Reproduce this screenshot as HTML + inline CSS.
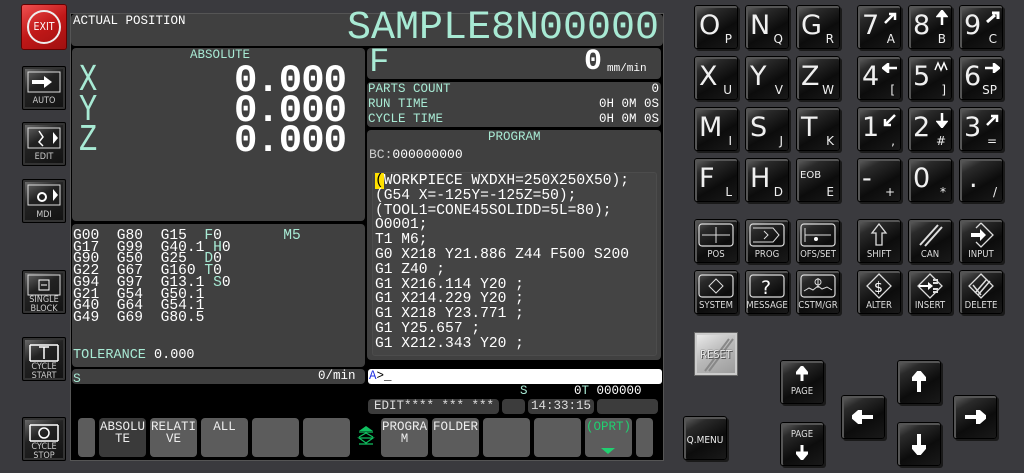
<!DOCTYPE html>
<html><head><meta charset="utf-8">
<style>
*{margin:0;padding:0;box-sizing:border-box}
body{width:1024px;height:473px;background:#3a3a3e;position:relative;overflow:hidden;font-family:"Liberation Mono",monospace;color:#fff}
.a{position:absolute}
.p{position:absolute;background:#404040;border-radius:4px}
.m{color:#a8ead4}
.t{font-size:12.5px;line-height:15px;white-space:pre}
.key{position:absolute;width:44px;height:44px;border-radius:3px;background:linear-gradient(150deg,#6a6a6a 0%,#2a2a2a 25%,#0c0c0c 60%,#1a1a1a 100%);box-shadow:inset 0 0 0 1px #000,inset 1px 1px 0 2px #555,2px 2px 0 #1a1a1a;font-family:"DejaVu Sans",sans-serif;color:#f0f0f0}
.key .b{position:absolute;left:5px;top:6px;font-size:27px;line-height:30px}
.key .s{position:absolute;right:6px;bottom:4px;font-size:12px;line-height:12px}
.key .l{position:absolute;left:0;right:0;bottom:3px;text-align:center;font-family:"DejaVu Sans Condensed","DejaVu Sans",sans-serif;font-size:9.5px;color:#ddd}
.key svg{position:absolute}
.sk{position:absolute;top:418px;height:39px;background:#5c5c5c;border-radius:4px;color:#eee;font-size:12.5px;line-height:12px;text-align:center;padding-top:3px}
.lb{position:absolute;left:22px;width:44px;height:44px;background:linear-gradient(150deg,#777,#222 40%,#111);box-shadow:inset 0 0 0 1px #000,inset 0 0 0 3px #333;border-radius:2px}
.lb .l{position:absolute;left:0;right:0;text-align:center;color:#ccc;font-family:"DejaVu Sans Condensed",sans-serif;font-size:9px;line-height:9px}
</style></head><body>

<div class="a" style="left:22px;top:5px;width:44px;height:44px;background:linear-gradient(150deg,#f05050,#c01818 50%,#a01010);border-radius:2px;box-shadow:0 0 0 1px #600">
<div class="a" style="left:5px;top:5px;width:34px;height:34px;border:2px solid #eee;border-radius:50%;color:#fff;font-family:'DejaVu Sans Condensed',sans-serif;font-size:10.5px;line-height:30px;text-align:center">EXIT</div></div>

<div class="lb" style="top:66px"><svg class="a" style="left:5px;top:5px" width="34" height="22"><rect x="1" y="1" width="32" height="20" fill="none" stroke="#ddd"/><path d="M5 9h12v-4l8 6-8 6v-4H5z" fill="#fff"/></svg><div class="l" style="top:31px">AUTO</div></div>
<div class="lb" style="top:122px"><svg class="a" style="left:5px;top:5px" width="34" height="22"><rect x="1" y="1" width="32" height="20" fill="none" stroke="#ddd"/><path d="M12 4l4 6-4 5 4 4" fill="none" stroke="#fff" stroke-width="1.5"/><path d="M26 5l5 6-5 6z" fill="#fff"/></svg><div class="l" style="top:31px">EDIT</div></div>
<div class="lb" style="top:179px"><svg class="a" style="left:5px;top:5px" width="34" height="22"><rect x="1" y="1" width="32" height="20" fill="none" stroke="#ddd"/><circle cx="15" cy="13" r="4" fill="none" stroke="#fff" stroke-width="2"/><path d="M26 5l5 6-5 6z" fill="#fff"/></svg><div class="l" style="top:32px">MDI</div></div>
<div class="lb" style="top:270px"><svg class="a" style="left:5px;top:4px" width="34" height="22"><rect x="1" y="1" width="32" height="20" fill="none" stroke="#ddd"/><rect x="12" y="6" width="10" height="10" fill="none" stroke="#fff"/><path d="M14 11h6" stroke="#fff"/></svg><div class="l" style="top:26px">SINGLE<br>BLOCK</div></div>
<div class="lb" style="top:337px"><svg class="a" style="left:5px;top:4px" width="34" height="22"><path d="M3 4h28M3 4v16M31 4v16M3 20h28M12 6h10M17 6v12" stroke="#fff" fill="none" stroke-width="1.5"/></svg><div class="l" style="top:26px">CYCLE<br>START</div></div>
<div class="lb" style="top:417px"><svg class="a" style="left:5px;top:4px" width="34" height="22"><path d="M3 4h28M3 4v16M31 4v16M3 20h28" stroke="#fff" fill="none" stroke-width="1.5"/><circle cx="17" cy="12" r="5" fill="none" stroke="#fff" stroke-width="1.5"/></svg><div class="l" style="top:26px">CYCLE<br>STOP</div></div>

<div class="a" style="left:70px;top:13px;width:594px;height:448px;background:#000;border:1px solid #555"></div>
<div class="p" style="left:71px;top:14px;width:592px;height:32px"></div>
<div class="a t" style="left:73px;top:14px">ACTUAL POSITION</div>
<div class="a m" style="left:347px;top:7px;font-size:40px;line-height:44px;letter-spacing:0px">SAMPLE8N00000</div>

<div class="p" style="left:72px;top:48px;width:293px;height:173px"></div>
<div class="a m t" style="left:190px;top:48px">ABSOLUTE</div>
<div class="a m" style="left:79px;top:66px;font-size:38px;line-height:30px;transform:scaleX(0.8);transform-origin:left">X<br>Y<br>Z</div>
<div class="a" style="left:234px;top:66px;font-size:39px;line-height:30px;font-weight:bold;letter-spacing:-1px">0.000<br>0.000<br>0.000</div>

<div class="p" style="left:72px;top:224px;width:293px;height:143px"></div>
<div class="a" style="left:73px;top:231px;font-size:14.6px;line-height:11.7px;white-space:pre">G00  G80  G15  <span class="m">F</span>0       <span class="m">M5</span>
G17  G99  G40.1 <span class="m">H</span>0
G90  G50  G25  <span class="m">D</span>0
G22  G67  G160 <span class="m">T</span>0
G94  G97  G13.1 <span class="m">S</span>0
G21  G54  G50.1
G40  G64  G54.1
G49  G69  G80.5</div>
<div class="a" style="left:73px;top:348px;font-size:13.5px;white-space:pre"><span class="m">TOLERANCE</span> 0.000</div>

<div class="p" style="left:72px;top:369px;width:293px;height:15px"></div>
<div class="a m t" style="left:73px;top:371px;font-size:13px">S</div>
<div class="a t" style="left:318px;top:369px">0/min</div>

<div class="p" style="left:367px;top:48px;width:294px;height:31px"></div>
<div class="a m" style="left:369px;top:44px;font-size:34px;line-height:38px">F</div>
<div class="a" style="left:584px;top:44px;font-size:30px;line-height:36px;font-weight:bold">0</div>
<div class="a" style="left:607px;top:63px;font-size:11px">mm/min</div>

<div class="p" style="left:367px;top:82px;width:294px;height:45px"></div>
<div class="a m t" style="left:368px;top:82px">PARTS COUNT
RUN TIME
CYCLE TIME</div>
<div class="a t" style="left:560px;top:82px;text-align:right;width:99px">0
0H 0M 0S
0H 0M 0S</div>

<div class="p" style="left:367px;top:130px;width:294px;height:230px"></div>
<div class="a m t" style="left:488px;top:130px">PROGRAM</div>
<div class="a t" style="left:369px;top:147px;font-size:13px"><span style="color:#ccc">BC:</span>000000000</div>
<div class="a" style="left:372px;top:172px;width:285px;height:184px;background:#444;border:1px solid #4c4c4c;border-radius:3px"></div>
<div class="a" style="left:375px;top:174px;font-size:14.6px;line-height:14.8px;white-space:pre"><span style="background:#ffe000;color:#000">(</span>WORKPIECE WXDXH=250X250X50);
(G54 X=-125Y=-125Z=50);
(TOOL1=CONE45SOLIDD=5L=80);
O0001;
T1 M6;
G0 X218 Y21.886 Z44 F500 S200
G1 Z40 ;
G1 X216.114 Y20 ;
G1 X214.229 Y20 ;
G1 X218 Y23.771 ;
G1 Y25.657 ;
G1 X212.343 Y20 ;</div>

<div class="a" style="left:368px;top:369px;width:294px;height:15px;background:#fff;border-radius:3px"></div>
<div class="a t" style="left:369px;top:369px;color:#000"><span style="color:#2030e0">A</span>&gt;_</div>
<div class="a m t" style="left:520px;top:384px">S</div>
<div class="a t" style="left:574px;top:384px">0<span class="m">T</span> 000000</div>
<div class="p" style="left:368px;top:399px;width:131px;height:15px;background:#3c3c3c"></div>
<div class="a t" style="left:374px;top:399px;color:#ddd">EDIT**** *** ***</div>
<div class="p" style="left:502px;top:399px;width:23px;height:15px;background:#3c3c3c"></div>
<div class="p" style="left:528px;top:399px;width:66px;height:15px;background:#3c3c3c"></div>
<div class="a t" style="left:531px;top:399px;color:#ddd">14:33:15</div>
<div class="p" style="left:597px;top:399px;width:61px;height:15px;background:#3c3c3c"></div>

<div class="sk" style="left:78px;width:17px"></div>
<div class="sk" style="left:99px;width:47px;background:#3a3a3a">ABSOLU<br>TE</div>
<div class="sk" style="left:150px;width:47px">RELATI<br>VE</div>
<div class="sk" style="left:201px;width:47px">ALL</div>
<div class="sk" style="left:252px;width:47px"></div>
<div class="sk" style="left:303px;width:47px"></div>
<svg class="a" style="left:357px;top:425px" width="18" height="24"><path d="M2 6l7-5 7 5z" fill="#10c060"/><path d="M2 7h14M2 12l7-4 7 4M2 13h14l-7 5zM2 19h14" stroke="#10c060" fill="none" stroke-width="1.2"/></svg>
<div class="sk" style="left:381px;width:47px">PROGRA<br>M</div>
<div class="sk" style="left:432px;width:47px">FOLDER</div>
<div class="sk" style="left:483px;width:47px"></div>
<div class="sk" style="left:534px;width:47px"></div>
<div class="sk" style="left:585px;width:47px;color:#20d070">(OPRT)<svg class="a" style="left:15px;top:29px" width="16" height="8"><path d="M1 1h14l-7 6z" fill="#20d070"/></svg></div>
<div class="sk" style="left:636px;width:17px"></div>

<div class="key" style="left:694px;top:5px"><span class="b">O</span><span class="s">P</span></div>
<div class="key" style="left:745px;top:5px"><span class="b">N</span><span class="s">Q</span></div>
<div class="key" style="left:796px;top:5px"><span class="b">G</span><span class="s">R</span></div>
<div class="key" style="left:694px;top:56px"><span class="b">X</span><span class="s">U</span></div>
<div class="key" style="left:745px;top:56px"><span class="b">Y</span><span class="s">V</span></div>
<div class="key" style="left:796px;top:56px"><span class="b">Z</span><span class="s">W</span></div>
<div class="key" style="left:694px;top:107px"><span class="b">M</span><span class="s">I</span></div>
<div class="key" style="left:745px;top:107px"><span class="b">S</span><span class="s">J</span></div>
<div class="key" style="left:796px;top:107px"><span class="b">T</span><span class="s">K</span></div>
<div class="key" style="left:694px;top:158px"><span class="b">F</span><span class="s">L</span></div>
<div class="key" style="left:745px;top:158px"><span class="b">H</span><span class="s">D</span></div>
<div class="key" style="left:796px;top:158px"><span class="a" style="left:4px;top:12px;font-size:10px">EOB</span><span class="s">E</span></div>

<div class="key" style="left:857px;top:5px"><span class="b">7</span><span class="s">A</span><svg style="left:26px;top:6px" width="14" height="14"><path d="M2 12L11 3M6 3h6v6" stroke="#fff" stroke-width="2.5" fill="none"/></svg></div>
<div class="key" style="left:908px;top:5px"><span class="b">8</span><span class="s">B</span><svg style="left:28px;top:5px" width="12" height="16"><path d="M6 15V4M2 6l4-5 4 5z" stroke="#fff" stroke-width="2.5" fill="#fff"/></svg></div>
<div class="key" style="left:959px;top:5px"><span class="b">9</span><span class="s">C</span><svg style="left:26px;top:5px" width="15" height="14"><path d="M2 12L10 5M7 3h6v6" stroke="#fff" stroke-width="3" fill="none"/></svg></div>
<div class="key" style="left:857px;top:56px"><span class="b">4</span><span class="s">[</span><svg style="left:25px;top:7px" width="16" height="10"><path d="M15 5H5M6 1L1 5l5 4z" stroke="#fff" stroke-width="2.5" fill="#fff"/></svg></div>
<div class="key" style="left:908px;top:56px"><span class="b">5</span><span class="s">]</span><svg style="left:26px;top:5px" width="14" height="12"><path d="M1 9l3-7 3 7 3-7 3 7" stroke="#fff" stroke-width="1.5" fill="none"/></svg></div>
<div class="key" style="left:959px;top:56px"><span class="b">6</span><span class="s">SP</span><svg style="left:25px;top:7px" width="16" height="10"><path d="M1 5h10M10 1l5 4-5 4z" stroke="#fff" stroke-width="2.5" fill="#fff"/></svg></div>
<div class="key" style="left:857px;top:107px"><span class="b">1</span><span class="s">,</span><svg style="left:26px;top:6px" width="14" height="14"><path d="M12 2L3 11M2 6v6h6" stroke="#fff" stroke-width="2.5" fill="none"/></svg></div>
<div class="key" style="left:908px;top:107px"><span class="b">2</span><span class="s">#</span><svg style="left:28px;top:5px" width="12" height="16"><path d="M6 1v11M2 10l4 5 4-5z" stroke="#fff" stroke-width="2.5" fill="#fff"/></svg></div>
<div class="key" style="left:959px;top:107px"><span class="b">3</span><span class="s">=</span><svg style="left:26px;top:6px" width="14" height="14"><path d="M2 12L11 3M6 3h6v6" stroke="#fff" stroke-width="2.5" fill="none"/></svg></div>
<div class="key" style="left:857px;top:158px"><span class="b">-</span><span class="s">+</span></div>
<div class="key" style="left:908px;top:158px"><span class="b">0</span><span class="s">*</span></div>
<div class="key" style="left:959px;top:158px"><span class="b" style="left:10px">.</span><span class="s">/</span></div>

<div class="key" style="left:694px;top:219px"><svg style="left:4px;top:4px" width="36" height="24"><rect x="1" y="1" width="34" height="22" rx="3" fill="none" stroke="#ddd" stroke-width="1.2"/><path d="M4 12h28M18 4v16" stroke="#ddd"/></svg><span class="l">POS</span></div>
<div class="key" style="left:745px;top:219px"><svg style="left:4px;top:4px" width="36" height="24"><rect x="1" y="1" width="34" height="22" rx="3" fill="none" stroke="#ddd" stroke-width="1.2"/><path d="M4 5h20l6 7-6 7H4M15 8l4 4-4 4" stroke="#ddd" fill="none"/></svg><span class="l">PROG</span></div>
<div class="key" style="left:796px;top:219px"><svg style="left:4px;top:4px" width="36" height="24"><rect x="1" y="1" width="34" height="22" rx="3" fill="none" stroke="#ddd" stroke-width="1.2"/><path d="M5 5v14M5 12h26" stroke="#ddd"/><circle cx="16" cy="16" r="2" fill="#fff"/></svg><span class="l">OFS/SET</span></div>
<div class="key" style="left:694px;top:270px"><svg style="left:4px;top:4px" width="36" height="24"><rect x="1" y="1" width="34" height="22" rx="3" fill="none" stroke="#ddd" stroke-width="1.2"/><path d="M18 5l7 7-7 7-7-7z" stroke="#ddd" fill="none"/></svg><span class="l">SYSTEM</span></div>
<div class="key" style="left:745px;top:270px"><svg style="left:4px;top:4px" width="36" height="24"><rect x="1" y="1" width="34" height="22" rx="3" fill="none" stroke="#ddd" stroke-width="1.2"/><text x="12" y="20" fill="#fff" font-size="19" font-family="DejaVu Sans">?</text></svg><span class="l">MESSAGE</span></div>
<div class="key" style="left:796px;top:270px"><svg style="left:4px;top:4px" width="36" height="24"><rect x="1" y="1" width="34" height="22" rx="3" fill="none" stroke="#ddd" stroke-width="1.2"/><path d="M4 17l5-3 4 2 5-4 4 3 5-2 5 3M18 4v10" stroke="#ddd" fill="none"/><circle cx="18" cy="8" r="3" fill="none" stroke="#ddd"/></svg><span class="l">CSTM/GR</span></div>

<div class="key" style="left:857px;top:219px"><svg style="left:13px;top:4px" width="18" height="24"><path d="M9 1l7 9h-4v12H6V10H2z" stroke="#ddd" fill="none" stroke-width="1.3"/></svg><span class="l">SHIFT</span></div>
<div class="key" style="left:908px;top:219px"><svg style="left:8px;top:4px" width="28" height="24"><path d="M4 22L22 2M9 23L26 4" stroke="#ddd" stroke-width="2"/></svg><span class="l">CAN</span></div>
<div class="key" style="left:959px;top:219px"><svg style="left:8px;top:3px" width="28" height="26"><path d="M14 1l12 12-12 12-5-5M9 6l5-5" stroke="#ddd" fill="none" stroke-width="1.3"/><path d="M4 11h9V7l6 6-6 6v-4H4z" fill="#fff"/></svg><span class="l">INPUT</span></div>
<div class="key" style="left:857px;top:270px"><svg style="left:8px;top:3px" width="28" height="26"><path d="M14 1l12 12-12 12L2 13z" stroke="#ddd" fill="none" stroke-width="1.3"/><text x="9" y="19" fill="#fff" font-size="14" font-family="DejaVu Sans">$</text></svg><span class="l">ALTER</span></div>
<div class="key" style="left:908px;top:270px"><svg style="left:8px;top:3px" width="28" height="26"><path d="M14 1l12 12-12 12L2 13z" stroke="#ddd" fill="none" stroke-width="1.3"/><path d="M3 12h9v-3l5 4-5 4v-3H3z" fill="#fff"/><path d="M17 7h5M17 10h5M17 16h5M17 19h5" stroke="#ddd" stroke-width="2"/></svg><span class="l">INSERT</span></div>
<div class="key" style="left:959px;top:270px"><svg style="left:8px;top:3px" width="28" height="26"><path d="M14 1l12 12-12 12L2 13z" stroke="#ddd" fill="none" stroke-width="1.3"/><path d="M8 20L20 6M11 22L23 8M6 12l8 10" stroke="#ddd" stroke-width="1.5"/></svg><span class="l">DELETE</span></div>

<div class="a" style="left:694px;top:332px;width:44px;height:44px;background:linear-gradient(150deg,#eee,#b8b8b8 50%,#999);border:1px solid #666;box-shadow:inset 0 0 0 2px #ccc"><svg class="a" style="left:4px;top:4px" width="36" height="36"><path d="M6 34L30 2M10 34L34 2" stroke="#888" stroke-width="2"/></svg><div class="a" style="left:0;right:0;top:15px;text-align:center;font-family:'DejaVu Sans Condensed',sans-serif;font-size:11px;color:#eee;text-shadow:0 0 1px #333,1px 1px 0 #555">RESET</div></div>

<div class="key" style="left:780px;top:360px"><svg style="left:16px;top:6px" width="12" height="16"><path d="M6 15V5M1 7l5-6 5 6z" stroke="#fff" stroke-width="3" fill="#fff"/></svg><span class="l" style="bottom:7px">PAGE</span></div>
<div class="key" style="left:780px;top:422px"><span class="l" style="top:7px;bottom:auto">PAGE</span><svg style="left:16px;top:22px" width="12" height="16"><path d="M6 1v10M1 9l5 6 5-6z" stroke="#fff" stroke-width="3" fill="#fff"/></svg></div>
<div class="key" style="left:897px;top:360px"><svg style="left:15px;top:11px" width="14" height="22"><path d="M7 21V6M1 8l6-7 6 7z" stroke="#fff" stroke-width="4" fill="#fff"/></svg></div>
<div class="key" style="left:897px;top:422px"><svg style="left:15px;top:11px" width="14" height="22"><path d="M7 1v15M1 14l6 7 6-7z" stroke="#fff" stroke-width="4" fill="#fff"/></svg></div>
<div class="key" style="left:841px;top:395px"><svg style="left:11px;top:15px" width="22" height="14"><path d="M21 7H6M8 1L1 7l7 6z" stroke="#fff" stroke-width="4" fill="#fff"/></svg></div>
<div class="key" style="left:953px;top:395px"><svg style="left:11px;top:15px" width="22" height="14"><path d="M1 7h15M14 1l7 6-7 6z" stroke="#fff" stroke-width="4" fill="#fff"/></svg></div>
<div class="key" style="left:683px;top:416px"><span class="l" style="bottom:14px;font-size:10px;color:#eee">Q.MENU</span></div>

</body></html>
